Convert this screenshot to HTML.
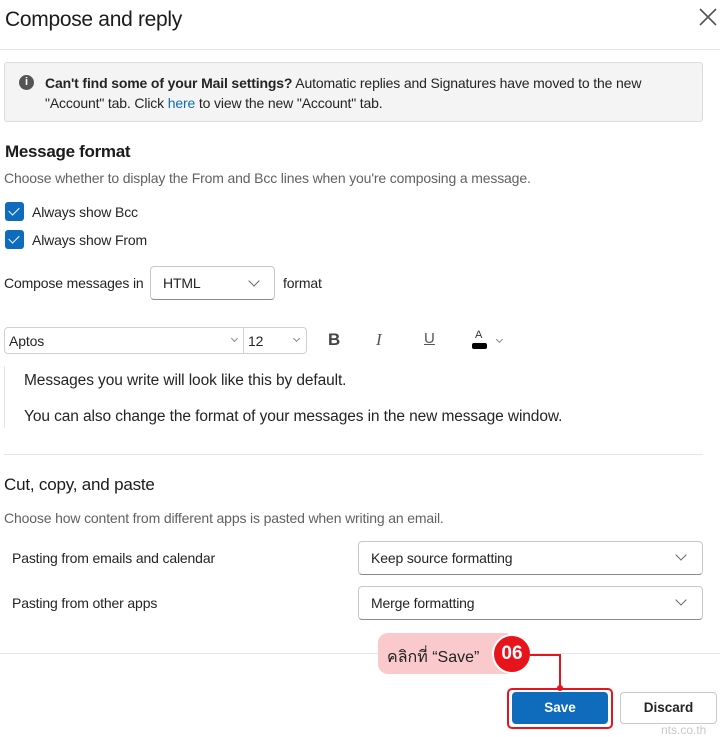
<!DOCTYPE html>
<html><head><meta charset="utf-8"><style>
*{margin:0;padding:0;box-sizing:border-box}
body{width:720px;height:736px;background:#fff;font-family:"Liberation Sans",sans-serif;color:#242424;position:relative;overflow:hidden}
.a{position:absolute;white-space:nowrap}
.t13{font-size:14px;letter-spacing:-0.15px}
.sel{position:absolute;border:1px solid #c8c8c8;border-bottom-color:#8a8a8a;border-radius:4px;background:#fff;font-size:14px;letter-spacing:-0.15px}
.chev{position:absolute;width:8px;height:8px;border-right:1.2px solid #666;border-bottom:1.2px solid #666;transform:rotate(45deg)}
.cb{position:absolute;left:5px;width:19px;height:19px;background:#0f6cbd;border-radius:3px}
.cb:after{content:"";position:absolute;left:6px;top:3px;width:5px;height:9px;border-right:1.6px solid #fff;border-bottom:1.6px solid #fff;transform:rotate(45deg)}
</style></head><body>
<div class="a" style="left:5px;top:8px;font-size:21px;letter-spacing:-0.3px;color:#1b1b1b">Compose and reply</div>
<svg class="a" style="left:699px;top:8px" width="18" height="18"><path d="M1 1L17 17M17 1L1 17" stroke="#555" stroke-width="1.6"/></svg>
<div class="a" style="left:0;top:49px;width:720px;height:1px;background:#e6e6e6"></div>
<div class="a" style="left:4px;top:62px;width:699px;height:60px;background:#f4f4f4;border:1px solid #dcdcdc;border-radius:3px"></div>
<div class="a" style="left:19px;top:75px;width:15px;height:15px;border-radius:50%;background:#555;color:#fff;font-size:11px;font-weight:bold;text-align:center;line-height:15px">i</div>
<div class="a t13" style="left:45px;top:73px;line-height:20px;color:#242424"><b>Can't find some of your Mail settings?</b> Automatic replies and Signatures have moved to the new<br>"Account" tab. Click <span style="color:#0f6cbd">here</span> to view the new "Account" tab.</div>
<div class="a" style="left:5px;top:142px;font-size:17px;font-weight:bold;letter-spacing:-0.3px;color:#1b1b1b">Message format</div>
<div class="a t13" style="left:4px;top:170px;color:#616161">Choose whether to display the From and Bcc lines when you're composing a message.</div>
<div class="cb" style="top:202px"></div>
<div class="a t13" style="left:32px;top:204px">Always show Bcc</div>
<div class="cb" style="top:230px"></div>
<div class="a t13" style="left:32px;top:232px">Always show From</div>
<div class="a t13" style="left:4px;top:275px">Compose messages in</div>
<div class="sel" style="left:150px;top:266px;width:125px;height:34px"><span class="a" style="left:12px;top:8px">HTML</span><div class="chev" style="left:99px;top:10px"></div></div>
<div class="a t13" style="left:283px;top:275px">format</div>
<div class="sel" style="left:4px;top:327px;width:303px;height:27px;border-color:#d0d0d0"><span class="a" style="left:4px;top:5px">Aptos</span><div class="a" style="left:238px;top:0;width:1px;height:25px;background:#d0d0d0"></div><div class="chev" style="left:227px;top:8px;width:5px;height:5px;border-color:#888"></div><span class="a" style="left:243px;top:5px">12</span><div class="chev" style="left:289px;top:8px;width:5px;height:5px;border-color:#888"></div></div>
<div class="a" style="left:328px;top:330px;font-size:17px;font-weight:bold;color:#444">B</div>
<div class="a" style="left:376px;top:330px;font-size:17px;font-style:italic;color:#555;font-family:'Liberation Serif',serif">I</div>
<div class="a" style="left:424px;top:330px;font-size:15px;text-decoration:underline;color:#555">U</div>
<div class="a" style="left:475px;top:329px;font-size:11px;color:#333">A</div>
<div class="a" style="left:472px;top:343px;width:15px;height:6px;background:#000;border-radius:2px"></div>
<div class="chev" style="left:497px;top:337px;width:5px;height:5px;border-color:#888"></div>
<div class="a" style="left:4px;top:366px;width:1px;height:62px;background:#e6e6e6"></div>
<div class="a" style="left:24px;top:372px;font-size:15.5px;letter-spacing:-0.1px">Messages you write will look like this by default.</div>
<div class="a" style="left:24px;top:408px;font-size:15.5px;letter-spacing:-0.1px">You can also change the format of your messages in the new message window.</div>
<div class="a" style="left:4px;top:454px;width:699px;height:1px;background:#e6e6e6"></div>
<div class="a" style="left:4px;top:475px;font-size:17px;letter-spacing:-0.2px;color:#1b1b1b">Cut, copy, and paste</div>
<div class="a t13" style="left:4px;top:510px;color:#616161">Choose how content from different apps is pasted when writing an email.</div>
<div class="a t13" style="left:12px;top:550px">Pasting from emails and calendar</div>
<div class="sel" style="left:358px;top:541px;width:345px;height:34px"><span class="a" style="left:12px;top:8px">Keep source formatting</span><div class="chev" style="left:318px;top:9px"></div></div>
<div class="a t13" style="left:12px;top:595px">Pasting from other apps</div>
<div class="sel" style="left:358px;top:586px;width:345px;height:34px"><span class="a" style="left:12px;top:8px">Merge formatting</span><div class="chev" style="left:318px;top:9px"></div></div>
<div class="a" style="left:0;top:653px;width:720px;height:1px;background:#e6e6e6"></div>
<div class="a" style="left:378px;top:633px;width:130px;height:41px;background:#f9c9cc;border-radius:10px 0 0 10px"></div>
<div class="a" style="left:387px;top:645px;font-size:16px;color:#222;font-family:'Liberation Sans','DejaVu Sans',sans-serif">คลิกที่ “Save”</div>
<div class="a" style="left:492px;top:634px;width:40px;height:40px;border-radius:50%;background:#e8141c;border:2px solid #fff;color:#fff;font-weight:bold;font-size:19px;text-align:center;line-height:36px">06</div>
<svg class="a" style="left:530px;top:650px" width="36" height="42"><path d="M0 5H30V38" stroke="#e8141c" stroke-width="2" fill="none"/><circle cx="30" cy="38" r="3" fill="#e8141c"/></svg>
<div class="a" style="left:507px;top:688px;width:106px;height:41px;border:2px solid #e8141c;border-radius:5px"></div>
<div class="a" style="left:512px;top:692px;width:96px;height:32px;background:#0f6cbd;border-radius:4px;color:#fff;font-weight:bold;font-size:13.5px;text-align:center;line-height:32px">Save</div>
<div class="a" style="left:620px;top:692px;width:97px;height:32px;background:#fff;border:1px solid #c8c8c8;border-radius:4px;font-weight:bold;font-size:13.5px;text-align:center;line-height:30px">Discard</div>
<div class="a" style="left:661px;top:723px;font-size:12px;color:#c8c8c8">nts.co.th</div>
</body></html>
